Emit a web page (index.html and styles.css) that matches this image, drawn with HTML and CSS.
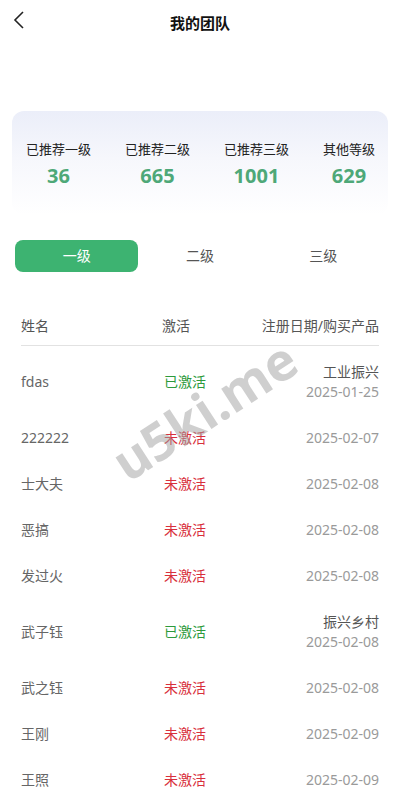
FILE: index.html
```html
<!DOCTYPE html>
<html lang="zh-CN">
<head>
    <meta charset="UTF-8">
    <meta name="viewport" content="width=device-width, initial-scale=1.0">
    <title>我的团队</title>
    <link rel="stylesheet" href="styles.css">
</head>
<body>
    <header class="topbar">
        <a class="back">
            <svg width="12" height="18" viewBox="0 0 12 18"><path d="M10 1 L2 9 L10 17" fill="none" stroke="#222" stroke-width="1.6"/></svg>
        </a>
        <h1>我的团队</h1>
    </header>

    <section class="stats">
        <div class="stat">
            <span class="label">已推荐一级</span>
            <span class="num">36</span>
        </div>
        <div class="stat">
            <span class="label">已推荐二级</span>
            <span class="num">665</span>
        </div>
        <div class="stat">
            <span class="label">已推荐三级</span>
            <span class="num">1001</span>
        </div>
        <div class="stat">
            <span class="label">其他等级</span>
            <span class="num">629</span>
        </div>
    </section>

    <nav class="tabs">
        <a class="tab active">一级</a>
        <a class="tab">二级</a>
        <a class="tab">三级</a>
    </nav>

    <section class="list">
        <div class="row head">
            <span class="name">姓名</span>
            <span class="status">激活</span>
            <span class="info">注册日期/购买产品</span>
        </div>
        <div class="rows">
            <div class="row">
                <span class="name">fdas</span>
                <span class="status on">已激活</span>
                <span class="info"><em>工业振兴</em>2025-01-25</span>
            </div>
            <div class="row">
                <span class="name">222222</span>
                <span class="status off">未激活</span>
                <span class="info">2025-02-07</span>
            </div>
            <div class="row">
                <span class="name">士大夫</span>
                <span class="status off">未激活</span>
                <span class="info">2025-02-08</span>
            </div>
            <div class="row">
                <span class="name">恶搞</span>
                <span class="status off">未激活</span>
                <span class="info">2025-02-08</span>
            </div>
            <div class="row">
                <span class="name">发过火</span>
                <span class="status off">未激活</span>
                <span class="info">2025-02-08</span>
            </div>
            <div class="row">
                <span class="name">武子钰</span>
                <span class="status on">已激活</span>
                <span class="info"><em>振兴乡村</em>2025-02-08</span>
            </div>
            <div class="row">
                <span class="name">武之钰</span>
                <span class="status off">未激活</span>
                <span class="info">2025-02-08</span>
            </div>
            <div class="row">
                <span class="name">王刚</span>
                <span class="status off">未激活</span>
                <span class="info">2025-02-09</span>
            </div>
            <div class="row">
                <span class="name">王照</span>
                <span class="status off">未激活</span>
                <span class="info">2025-02-09</span>
            </div>
        </div>
    </section>

    <div class="watermark">u5ki.me</div>
</body>
</html>
```

FILE: styles.css
```css
body, html {
    margin: 0;
    padding: 0;
}

body {
    background-color: #fff;
    font-family: "Noto Sans", "Noto Sans CJK SC", sans-serif;
    color: #333;
    overflow: hidden;
    height: 800px;
}

.topbar {
    display: flex;
    align-items: center;
    justify-content: center;
    height: 44px;
}

.back {
    position: absolute;
    left: 13px;
    top: 11px;
    line-height: 0;
}

h1 {
    margin: 0;
    font-size: 15px;
    font-weight: bold;
    color: #111;
}

.stats {
    display: flex;
    justify-content: space-between;
    margin: 67px 12px 0;
    padding: 29px 13px 26px 14px;
    border-radius: 12px;
    background: linear-gradient(180deg, #ebeef9 0%, #f6f7fc 45%, #fff 100%);
}

.stat {
    display: flex;
    flex-direction: column;
    align-items: center;
}

.stat .label {
    font-size: 13px;
    line-height: 18px;
    color: #222;
}

.stat .num {
    margin-top: 5px;
    font-size: 20px;
    line-height: 26px;
    font-weight: bold;
    color: #4ea878;
}

.tabs {
    display: flex;
    margin: 25px 15px 0;
}

.tab {
    flex: 1;
    height: 32px;
    line-height: 32px;
    text-align: center;
    font-size: 14px;
    color: #555;
    border-radius: 8px;
}

.tab.active {
    background-color: #3db371;
    color: #fff;
}

.list {
    margin: 44px 21px 0;
}

.row {
    display: flex;
    align-items: center;
    padding: 13px 0;
    font-size: 14px;
    line-height: 20px;
}

.row.head {
    padding: 0 0 9px;
    border-bottom: 1px solid #e2e2e2;
    color: #555;
}

.rows {
    padding-top: 3px;
}

.name {
    width: 141px;
    color: #666;
}

.status {
    width: 60px;
    padding-left: 2px;
}

.head .name, .head .status {
    color: #555;
}

.head .status {
    padding-left: 0;
}

.status.on {
    color: #2d9a3c;
}

.status.off {
    color: #d8303c;
}

.info {
    flex: 1;
    display: flex;
    flex-direction: column;
    align-items: flex-end;
    color: #9a9a9a;
}

.head .info {
    color: #555;
}

.info em {
    font-style: normal;
    color: #555;
}

.watermark {
    position: absolute;
    left: 100px;
    top: 374px;
    font-size: 52px;
    font-weight: bold;
    color: rgba(160, 160, 160, 0.5);
    transform: rotate(-33deg);
    pointer-events: none;
}
```
